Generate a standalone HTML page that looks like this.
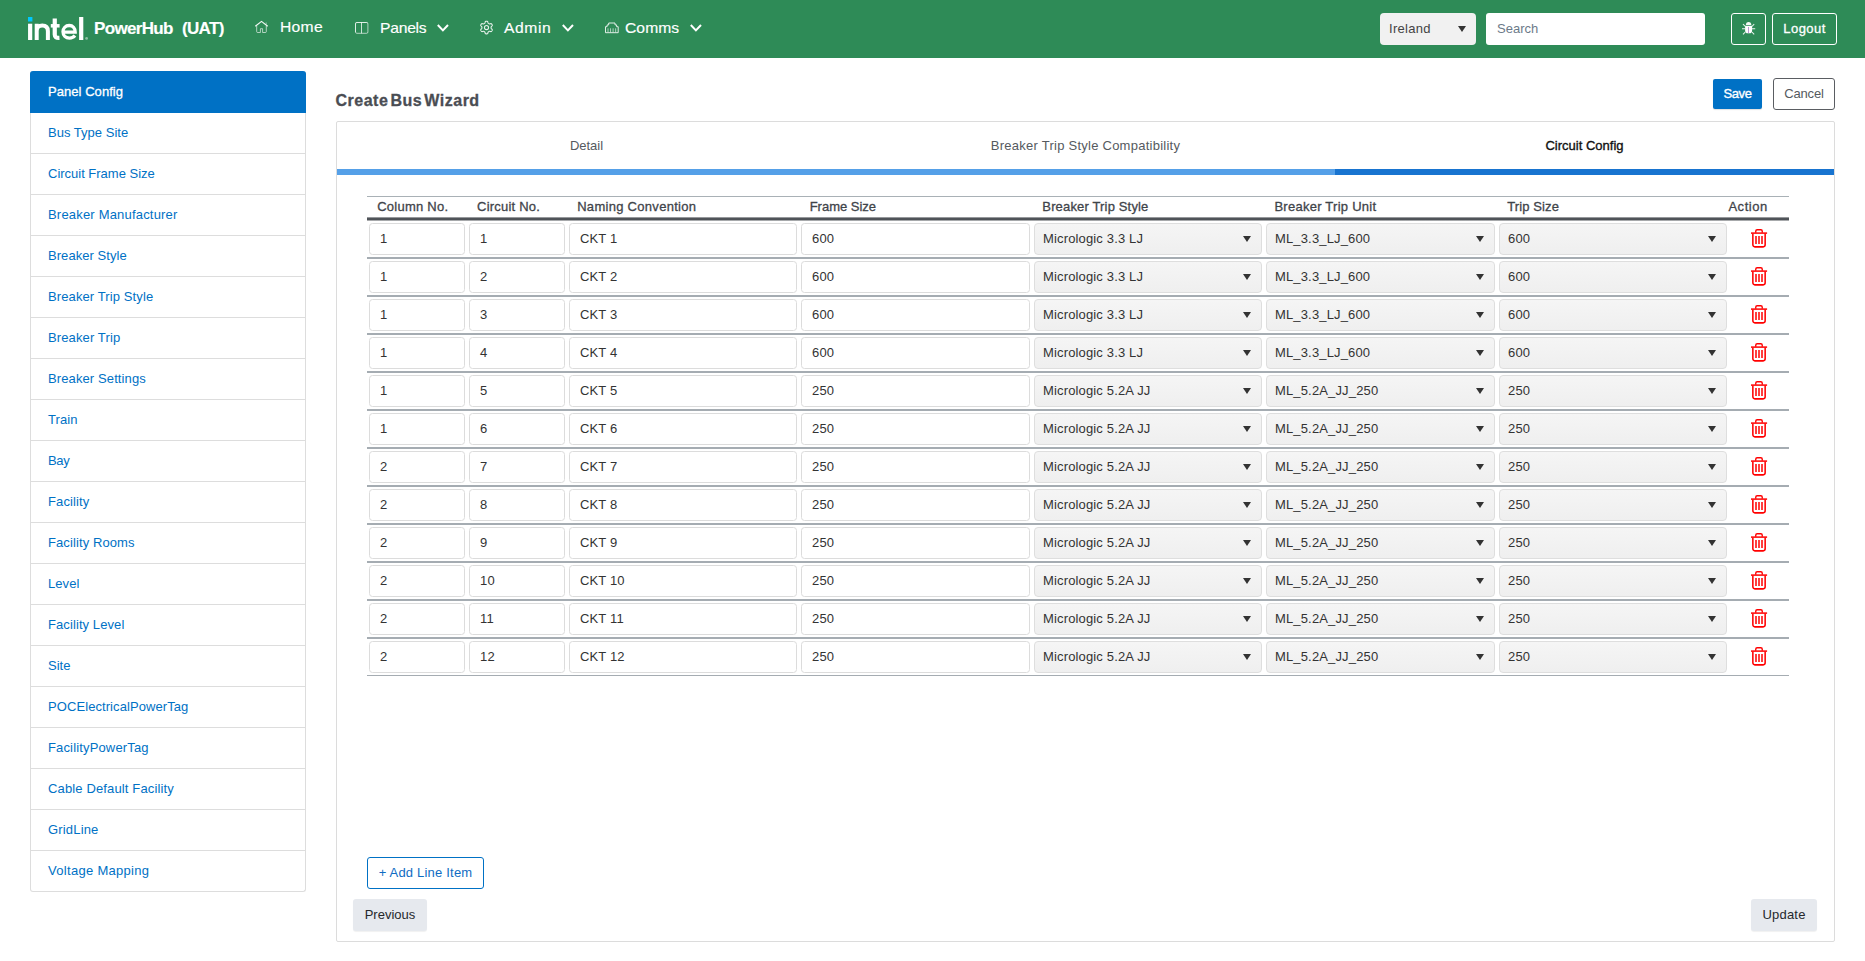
<!DOCTYPE html>
<html lang="en">
<head>
<meta charset="utf-8">
<title>PowerHub (UAT) - Create Bus Wizard</title>
<style>
*{box-sizing:border-box;margin:0;padding:0}
html,body{width:1865px;height:961px;overflow:hidden;background:#fff}
body{font-family:"Liberation Sans",sans-serif;font-size:13px;color:#333;position:relative}
.abs{position:absolute}
/* NAVBAR */
#nav{position:absolute;left:0;top:0;width:1865px;height:58px;background:#2e8b57}
#nav .t{position:absolute;color:#fff;white-space:pre;line-height:1}
.brand{font-weight:700;font-size:17px;letter-spacing:-.66px;-webkit-text-stroke:.15px #fff}
.nl{font-size:14.5px;transform:scaleX(1.08);transform-origin:0 0;-webkit-text-stroke:.15px #fff}
#nav svg{position:absolute;overflow:visible}
.nsel{position:absolute;left:1380px;top:13px;width:96px;height:32px;background:#f1f1f1;border-radius:4px;color:#444;font-size:13px;line-height:32px;padding-left:9px;letter-spacing:.3px}
.nsel:after,.sel:after{content:"";position:absolute;border-left:4px solid transparent;border-right:4px solid transparent;border-top:6px solid #333}
.nsel:after{left:77.5px;top:13px}
.nsearch{position:absolute;left:1486px;top:13px;width:219px;height:32px;background:#fff;border-radius:3px;color:#6c7a89;font-size:13px;line-height:32px;padding-left:11px}
.nbtn{position:absolute;top:13px;height:32px;border:1px solid #fff;border-radius:3px;color:#fff;font-size:13px;line-height:30px;text-align:center}
/* SIDEBAR */
#side{position:absolute;left:30px;top:71px;width:276px;border:1px solid #ddd;border-top:0;border-radius:3px}
#side div{height:41px;line-height:39px;padding-left:17px;border-top:1px solid #ddd;color:#0071c5;white-space:pre;font-size:13px}
#side div.act{height:42px;line-height:41px;margin:0 -1px;padding-left:18px;background:#0071c5;color:#fff;border-top:0;border-radius:3px 3px 0 0;-webkit-text-stroke:.3px #fff}
#side div.first{border-top:0;height:40px;line-height:39px}
/* MAIN */
#title{position:absolute;left:335.500px;top:92px;font-size:16px;font-weight:700;color:#4a4d53;line-height:18px;white-space:pre;letter-spacing:.5px;word-spacing:-2.800px;-webkit-text-stroke:.3px #4a4d53}
#save{position:absolute;left:1713px;top:79px;width:49px;height:30px;background:#0071c5;border-radius:2px;color:#fff;line-height:29px;text-align:center;font-size:13px;box-shadow:0 1px 1px rgba(0,0,0,.12);-webkit-text-stroke:.35px #fff;letter-spacing:-.4px}
#cancel{position:absolute;left:1773px;top:78px;width:62px;height:32px;border:1px solid #5a5d62;border-radius:3px;color:#555a60;line-height:30px;text-align:center;font-size:13px;letter-spacing:-.2px}
#panel{position:absolute;left:336px;top:121px;width:1499px;height:821px;border:1px solid #dcdcdc;border-radius:2px}
.tab{position:absolute;top:138px;width:499px;text-align:center;font-size:13px;line-height:16px;color:#555a60;white-space:pre}
.bar{position:absolute;top:169px;height:6px}
/* TABLE */
#tbl{position:absolute;left:367px;top:196px;width:1422px}
#th{height:21px;border-top:1px solid #a9b1b6;position:relative}
#th span{position:absolute;top:2.300px;line-height:15px;font-size:13px;color:#3f444a;white-space:pre;-webkit-text-stroke:.3px #3f444a}
#thb{height:4px;background:linear-gradient(to bottom,rgba(80,84,89,.6) 0,rgba(80,84,89,.6) 1px,#51555a 1px,#4d5156 3px,rgba(80,84,89,.5) 3px,rgba(80,84,89,.5) 4px)}
.row{height:38px;border-bottom:2px solid #a5acb2;position:relative}
.row:last-child{border-bottom:1px solid #a5acb2;height:37px}
.in,.sel{position:absolute;top:2px;height:32px;border:1px solid #dcdcdc;border-radius:3.500px;line-height:30px;font-size:13px;color:#333;white-space:pre;padding-left:10px;background:#fff;letter-spacing:.15px}
.sel{background:linear-gradient(#f5f5f5,#efefef);padding-left:8px;border-radius:4px;border-color:#dedede}
.sel:after{right:9.900px;top:12px}
.row svg{position:absolute;left:1384px;top:8px;overflow:visible}
#add{position:absolute;left:367px;top:857px;width:117px;height:32px;border:1px solid #0071c5;border-radius:3px;color:#0f6cc3;line-height:30px;text-align:center;font-size:13px;letter-spacing:.2px}
.gbtn{position:absolute;top:899px;height:32px;background:#e6e9ee;border-radius:3px;color:#25282c;line-height:31px;text-align:center;font-size:13px;box-shadow:0 1px 1px rgba(0,0,0,.06)}
</style>
</head>
<body>
<div id="nav">
  <!-- intel logo -->
  <svg style="left:28px;top:17px" width="61" height="24" viewBox="0 0 61 24">
    <rect x="0" y="0" width="4.400" height="4.500" fill="#00c7fd"/>
    <g fill="none" stroke="#fff" stroke-width="4.200">
      <path d="M2.150 6.700V23"/>
      <path d="M8.700 23V6.700M8.700 14c0-3.400 2.200-5.400 5.600-5.400 3.500 0 5.600 2 5.600 5.600V23" stroke-width="4"/>
      <path d="M26.750 1.400V17.500c0 2.600 1.500 3.600 4.700 3.400"/>
      <path d="M22.800 8.800h8.800" stroke-width="3.500"/>
      <path d="M35.200 15.200h12c0-4.200-2.400-6.700-6-6.700-3.700 0-6.200 2.700-6.200 6.300 0 3.700 2.600 6.300 6.500 6.300 2.400 0 4.200-.9 5.400-2.500" stroke-width="3.300"/>
      <path d="M53.200 0V23"/>
    </g>
    <circle cx="58.600" cy="21.400" r="1.400" fill="#fff" opacity=".45"/>
  </svg>
  <span class="t brand" style="left:94px;top:20px">PowerHub</span>
  <span class="t brand" style="left:182px;top:20px">(UAT)</span>

  <svg style="left:255px;top:21px" width="13" height="12" viewBox="0 0 13 12" fill="none" stroke="#fff" stroke-width="1"><path d="M.3 5.300 6.500.4l6.200 4.900" stroke-width="1.150" opacity=".95"/><path d="M1.700 4.800v5.800a.9.9 0 0 0 .9.900h2.800V7.700h2.200v3.800h2.800a.9.900 0 0 0 .9-.900V4.800" opacity=".62"/><path d="M11.200 1.400v2.200" opacity=".45"/></svg>
  <span class="t nl" style="left:280px;top:20px;letter-spacing:.28px">Home</span>

  <svg style="left:355px;top:22px" width="14" height="12" viewBox="0 0 14 12" fill="none" stroke="#fff" stroke-width="1"><rect x=".5" y=".5" width="12.400" height="10.800" rx="1.300" opacity=".62"/><path d="M.5 10V1.800A1.300 1.300 0 0 1 1.800.5h9.800a1.300 1.300 0 0 1 1.100.6" opacity=".6"/><path d="M6.500.5v10.800" opacity=".75"/></svg>
  <span class="t nl" style="left:380px;top:20.9px;letter-spacing:-.22px">Panels</span>
  <svg style="left:437px;top:24px" width="12" height="8" viewBox="0 0 12 8" fill="none" stroke="#fff" stroke-width="2"><path d="M.8 1l5.100 5.400L11 1"/></svg>

  <svg style="left:480px;top:21px" width="13" height="14" viewBox="0 0 13 14" fill="none" stroke="#fff" stroke-width="1.1" opacity=".88"><path d="M11.10 6.60 L11.10 6.36 L11.10 6.12 L11.14 5.86 L11.33 5.57 L11.76 5.19 L12.17 4.76 L12.29 4.38 L12.23 4.05 L12.11 3.74 L11.96 3.45 L11.78 3.17 L11.57 2.91 L11.32 2.70 L10.93 2.61 L10.35 2.75 L9.80 2.93 L9.46 2.95 L9.22 2.86 L9.01 2.74 L8.80 2.62 L8.59 2.50 L8.38 2.37 L8.18 2.21 L8.02 1.91 L7.91 1.34 L7.74 0.77 L7.47 0.48 L7.16 0.36 L6.83 0.31 L6.50 0.30 L6.17 0.31 L5.84 0.36 L5.53 0.48 L5.26 0.77 L5.09 1.34 L4.98 1.91 L4.82 2.21 L4.62 2.37 L4.41 2.50 L4.20 2.62 L3.99 2.74 L3.78 2.86 L3.54 2.95 L3.20 2.93 L2.65 2.75 L2.07 2.61 L1.68 2.70 L1.43 2.91 L1.22 3.17 L1.04 3.45 L0.89 3.74 L0.77 4.05 L0.71 4.38 L0.83 4.76 L1.24 5.19 L1.67 5.57 L1.86 5.86 L1.90 6.12 L1.90 6.36 L1.90 6.60 L1.90 6.84 L1.90 7.08 L1.86 7.34 L1.67 7.63 L1.24 8.01 L0.83 8.44 L0.71 8.82 L0.77 9.15 L0.89 9.46 L1.04 9.75 L1.22 10.03 L1.43 10.29 L1.68 10.50 L2.07 10.59 L2.65 10.45 L3.20 10.27 L3.54 10.25 L3.78 10.34 L3.99 10.46 L4.20 10.58 L4.41 10.70 L4.62 10.83 L4.82 10.99 L4.98 11.29 L5.09 11.86 L5.26 12.43 L5.53 12.72 L5.84 12.84 L6.17 12.89 L6.50 12.90 L6.83 12.89 L7.16 12.84 L7.47 12.72 L7.74 12.43 L7.91 11.86 L8.02 11.29 L8.18 10.99 L8.38 10.83 L8.59 10.70 L8.80 10.58 L9.01 10.46 L9.22 10.34 L9.46 10.25 L9.80 10.27 L10.35 10.45 L10.93 10.59 L11.32 10.50 L11.57 10.29 L11.78 10.03 L11.96 9.75 L12.11 9.46 L12.23 9.15 L12.29 8.82 L12.17 8.44 L11.76 8.01 L11.33 7.63 L11.14 7.34 L11.10 7.08 L11.10 6.84Z"/><circle cx="6.500" cy="6.600" r="2.050"/></svg>
  <span class="t nl" style="left:504px;top:20.9px;letter-spacing:.52px">Admin</span>
  <svg style="left:562px;top:24px" width="12" height="8" viewBox="0 0 12 8" fill="none" stroke="#fff" stroke-width="2"><path d="M.8 1l5.100 5.400L11 1"/></svg>

  <svg style="left:605px;top:22px" width="14" height="12" viewBox="0 0 14 12" fill="none" stroke="#fff" stroke-width="1"><path d="M.5 10.700V4.700H2.100V2.900H3.700V1H10V2.900H11.600V4.700H13.200V10.700Z" opacity=".85"/><path d="M3 6.300v4M5.550 6.300v4M8.100 6.300v4M10.650 6.300v4" opacity=".6"/></svg>
  <span class="t nl" style="left:625px;top:20.9px;letter-spacing:.06px">Comms</span>
  <svg style="left:690px;top:24px" width="12" height="8" viewBox="0 0 12 8" fill="none" stroke="#fff" stroke-width="2"><path d="M.8 1l5.100 5.400L11 1"/></svg>

  <div class="nsel">Ireland</div>
  <div class="nsearch">Search</div>
  <div class="nbtn" style="left:1731px;width:35px">
    <svg style="left:10px;top:7.800px" width="13" height="13" viewBox="0 0 13 13"><path d="M3.900 3.050a2.700 3.050 0 0 1 5.400 0z" fill="#fff" opacity=".95"/><path d="M3.100 3.700H10.100V8.400a2.800 2.800 0 0 1-2.800 2.800H5.900a2.800 2.800 0 0 1-2.800-2.800z" fill="#fff"/><path d="M1 2.200 3.300 4.500M12.200 2.200 9.900 4.500M0 6.800H3.200M10 6.800H13.200M1 12.400 3.300 10M12.200 12.400 9.900 10" stroke="#fff" stroke-width="1.050" fill="none" opacity=".9"/><path d="M6.150 4.900h.85v6.300h-.85z" fill="#b084c8"/></svg>
  </div>
  <div class="nbtn" style="left:1772px;width:65px;-webkit-text-stroke:.3px #fff;letter-spacing:.45px">Logout</div>
</div>

<div id="side">
  <div class="act" style="letter-spacing:0.05px">Panel Config</div>
  <div class="first" style="letter-spacing:0.02px">Bus Type Site</div>
  <div style="letter-spacing:-0.01px">Circuit Frame Size</div>
  <div style="letter-spacing:0.19px">Breaker Manufacturer</div>
  <div style="letter-spacing:0.05px">Breaker Style</div>
  <div style="letter-spacing:0.11px">Breaker Trip Style</div>
  <div style="letter-spacing:0.12px">Breaker Trip</div>
  <div style="letter-spacing:0.11px">Breaker Settings</div>
  <div style="letter-spacing:0.11px">Train</div>
  <div style="letter-spacing:-0.37px">Bay</div>
  <div style="letter-spacing:0.13px">Facility</div>
  <div style="letter-spacing:0.10px">Facility Rooms</div>
  <div style="letter-spacing:0.08px">Level</div>
  <div style="letter-spacing:0.09px">Facility Level</div>
  <div style="letter-spacing:0.02px">Site</div>
  <div style="letter-spacing:0.08px">POCElectricalPowerTag</div>
  <div style="letter-spacing:0.15px">FacilityPowerTag</div>
  <div style="letter-spacing:0.14px">Cable Default Facility</div>
  <div style="letter-spacing:0.17px">GridLine</div>
  <div style="letter-spacing:0.30px">Voltage Mapping</div>
</div>

<div id="title">Create Bus Wizard</div>
<div id="save">Save</div>
<div id="cancel">Cancel</div>
<div id="panel"></div>
<div class="tab" style="left:337px">Detail</div>
<div class="tab" style="left:836px;letter-spacing:.25px">Breaker Trip Style Compatibility</div>
<div class="tab" style="left:1335px;color:#111;-webkit-text-stroke:.35px #111">Circuit Config</div>
<div class="bar" style="left:337px;width:998px;background:#55a0e8"></div>
<div class="bar" style="left:1335px;width:499px;background:#1874d0"></div>

<div id="tbl">
  <div id="th">
    <span style="left:10.2px;letter-spacing:0.25px">Column No.</span>
    <span style="left:110.1px;letter-spacing:0.20px">Circuit No.</span>
    <span style="left:210.2px;letter-spacing:0.29px">Naming Convention</span>
    <span style="left:442.7px;letter-spacing:-0.01px">Frame Size</span>
    <span style="left:675.3px;letter-spacing:0.16px">Breaker Trip Style</span>
    <span style="left:907.4px;letter-spacing:0.26px">Breaker Trip Unit</span>
    <span style="left:1140.3px;letter-spacing:0.10px">Trip Size</span>
    <span style="left:1361.4px;letter-spacing:0.54px">Action</span>
  </div>
  <div id="thb"></div>
  <div id="rows">
    <div class="row"><div class="in" style="left:2px;width:96px">1</div><div class="in" style="left:102px;width:96px">1</div><div class="in" style="left:202px;width:228px">CKT 1</div><div class="in" style="left:434px;width:229px">600</div><div class="sel" style="left:667px;width:228px">Micrologic 3.3 LJ</div><div class="sel" style="left:899px;width:229px">ML_3.3_LJ_600</div><div class="sel" style="left:1132px;width:228px">600</div><svg width="16" height="19" viewBox="0 0 16 19" fill="none" stroke="#f00" stroke-width="1.550"><path d="M4.750 3.700V2.200a1.400 1.400 0 0 1 1.400-1.400h3.700a1.400 1.400 0 0 1 1.400 1.400V3.700" stroke-width="1.400"/><path d="M0 4.100h16.100" stroke-width="1.500"/><path d="M1.850 4.500V15.850a2 2 0 0 0 2 2h8.300a2 2 0 0 0 2-2V4.500"/><path d="M5 7v7.900M8 7v7.900M11 7v7.900" stroke-width="1.500"/></svg></div>
    <div class="row"><div class="in" style="left:2px;width:96px">1</div><div class="in" style="left:102px;width:96px">2</div><div class="in" style="left:202px;width:228px">CKT 2</div><div class="in" style="left:434px;width:229px">600</div><div class="sel" style="left:667px;width:228px">Micrologic 3.3 LJ</div><div class="sel" style="left:899px;width:229px">ML_3.3_LJ_600</div><div class="sel" style="left:1132px;width:228px">600</div><svg width="16" height="19" viewBox="0 0 16 19" fill="none" stroke="#f00" stroke-width="1.550"><path d="M4.750 3.700V2.200a1.400 1.400 0 0 1 1.400-1.400h3.700a1.400 1.400 0 0 1 1.400 1.400V3.700" stroke-width="1.400"/><path d="M0 4.100h16.100" stroke-width="1.500"/><path d="M1.850 4.500V15.850a2 2 0 0 0 2 2h8.300a2 2 0 0 0 2-2V4.500"/><path d="M5 7v7.900M8 7v7.900M11 7v7.900" stroke-width="1.500"/></svg></div>
    <div class="row"><div class="in" style="left:2px;width:96px">1</div><div class="in" style="left:102px;width:96px">3</div><div class="in" style="left:202px;width:228px">CKT 3</div><div class="in" style="left:434px;width:229px">600</div><div class="sel" style="left:667px;width:228px">Micrologic 3.3 LJ</div><div class="sel" style="left:899px;width:229px">ML_3.3_LJ_600</div><div class="sel" style="left:1132px;width:228px">600</div><svg width="16" height="19" viewBox="0 0 16 19" fill="none" stroke="#f00" stroke-width="1.550"><path d="M4.750 3.700V2.200a1.400 1.400 0 0 1 1.400-1.400h3.700a1.400 1.400 0 0 1 1.400 1.400V3.700" stroke-width="1.400"/><path d="M0 4.100h16.100" stroke-width="1.500"/><path d="M1.850 4.500V15.850a2 2 0 0 0 2 2h8.300a2 2 0 0 0 2-2V4.500"/><path d="M5 7v7.900M8 7v7.900M11 7v7.900" stroke-width="1.500"/></svg></div>
    <div class="row"><div class="in" style="left:2px;width:96px">1</div><div class="in" style="left:102px;width:96px">4</div><div class="in" style="left:202px;width:228px">CKT 4</div><div class="in" style="left:434px;width:229px">600</div><div class="sel" style="left:667px;width:228px">Micrologic 3.3 LJ</div><div class="sel" style="left:899px;width:229px">ML_3.3_LJ_600</div><div class="sel" style="left:1132px;width:228px">600</div><svg width="16" height="19" viewBox="0 0 16 19" fill="none" stroke="#f00" stroke-width="1.550"><path d="M4.750 3.700V2.200a1.400 1.400 0 0 1 1.400-1.400h3.700a1.400 1.400 0 0 1 1.400 1.400V3.700" stroke-width="1.400"/><path d="M0 4.100h16.100" stroke-width="1.500"/><path d="M1.850 4.500V15.850a2 2 0 0 0 2 2h8.300a2 2 0 0 0 2-2V4.500"/><path d="M5 7v7.900M8 7v7.900M11 7v7.900" stroke-width="1.500"/></svg></div>
    <div class="row"><div class="in" style="left:2px;width:96px">1</div><div class="in" style="left:102px;width:96px">5</div><div class="in" style="left:202px;width:228px">CKT 5</div><div class="in" style="left:434px;width:229px">250</div><div class="sel" style="left:667px;width:228px">Micrologic 5.2A JJ</div><div class="sel" style="left:899px;width:229px">ML_5.2A_JJ_250</div><div class="sel" style="left:1132px;width:228px">250</div><svg width="16" height="19" viewBox="0 0 16 19" fill="none" stroke="#f00" stroke-width="1.550"><path d="M4.750 3.700V2.200a1.400 1.400 0 0 1 1.400-1.400h3.700a1.400 1.400 0 0 1 1.400 1.400V3.700" stroke-width="1.400"/><path d="M0 4.100h16.100" stroke-width="1.500"/><path d="M1.850 4.500V15.850a2 2 0 0 0 2 2h8.300a2 2 0 0 0 2-2V4.500"/><path d="M5 7v7.900M8 7v7.900M11 7v7.900" stroke-width="1.500"/></svg></div>
    <div class="row"><div class="in" style="left:2px;width:96px">1</div><div class="in" style="left:102px;width:96px">6</div><div class="in" style="left:202px;width:228px">CKT 6</div><div class="in" style="left:434px;width:229px">250</div><div class="sel" style="left:667px;width:228px">Micrologic 5.2A JJ</div><div class="sel" style="left:899px;width:229px">ML_5.2A_JJ_250</div><div class="sel" style="left:1132px;width:228px">250</div><svg width="16" height="19" viewBox="0 0 16 19" fill="none" stroke="#f00" stroke-width="1.550"><path d="M4.750 3.700V2.200a1.400 1.400 0 0 1 1.400-1.400h3.700a1.400 1.400 0 0 1 1.400 1.400V3.700" stroke-width="1.400"/><path d="M0 4.100h16.100" stroke-width="1.500"/><path d="M1.850 4.500V15.850a2 2 0 0 0 2 2h8.300a2 2 0 0 0 2-2V4.500"/><path d="M5 7v7.900M8 7v7.900M11 7v7.900" stroke-width="1.500"/></svg></div>
    <div class="row"><div class="in" style="left:2px;width:96px">2</div><div class="in" style="left:102px;width:96px">7</div><div class="in" style="left:202px;width:228px">CKT 7</div><div class="in" style="left:434px;width:229px">250</div><div class="sel" style="left:667px;width:228px">Micrologic 5.2A JJ</div><div class="sel" style="left:899px;width:229px">ML_5.2A_JJ_250</div><div class="sel" style="left:1132px;width:228px">250</div><svg width="16" height="19" viewBox="0 0 16 19" fill="none" stroke="#f00" stroke-width="1.550"><path d="M4.750 3.700V2.200a1.400 1.400 0 0 1 1.400-1.400h3.700a1.400 1.400 0 0 1 1.400 1.400V3.700" stroke-width="1.400"/><path d="M0 4.100h16.100" stroke-width="1.500"/><path d="M1.850 4.500V15.850a2 2 0 0 0 2 2h8.300a2 2 0 0 0 2-2V4.500"/><path d="M5 7v7.900M8 7v7.900M11 7v7.900" stroke-width="1.500"/></svg></div>
    <div class="row"><div class="in" style="left:2px;width:96px">2</div><div class="in" style="left:102px;width:96px">8</div><div class="in" style="left:202px;width:228px">CKT 8</div><div class="in" style="left:434px;width:229px">250</div><div class="sel" style="left:667px;width:228px">Micrologic 5.2A JJ</div><div class="sel" style="left:899px;width:229px">ML_5.2A_JJ_250</div><div class="sel" style="left:1132px;width:228px">250</div><svg width="16" height="19" viewBox="0 0 16 19" fill="none" stroke="#f00" stroke-width="1.550"><path d="M4.750 3.700V2.200a1.400 1.400 0 0 1 1.400-1.400h3.700a1.400 1.400 0 0 1 1.400 1.400V3.700" stroke-width="1.400"/><path d="M0 4.100h16.100" stroke-width="1.500"/><path d="M1.850 4.500V15.850a2 2 0 0 0 2 2h8.300a2 2 0 0 0 2-2V4.500"/><path d="M5 7v7.900M8 7v7.900M11 7v7.900" stroke-width="1.500"/></svg></div>
    <div class="row"><div class="in" style="left:2px;width:96px">2</div><div class="in" style="left:102px;width:96px">9</div><div class="in" style="left:202px;width:228px">CKT 9</div><div class="in" style="left:434px;width:229px">250</div><div class="sel" style="left:667px;width:228px">Micrologic 5.2A JJ</div><div class="sel" style="left:899px;width:229px">ML_5.2A_JJ_250</div><div class="sel" style="left:1132px;width:228px">250</div><svg width="16" height="19" viewBox="0 0 16 19" fill="none" stroke="#f00" stroke-width="1.550"><path d="M4.750 3.700V2.200a1.400 1.400 0 0 1 1.400-1.400h3.700a1.400 1.400 0 0 1 1.400 1.400V3.700" stroke-width="1.400"/><path d="M0 4.100h16.100" stroke-width="1.500"/><path d="M1.850 4.500V15.850a2 2 0 0 0 2 2h8.300a2 2 0 0 0 2-2V4.500"/><path d="M5 7v7.900M8 7v7.900M11 7v7.900" stroke-width="1.500"/></svg></div>
    <div class="row"><div class="in" style="left:2px;width:96px">2</div><div class="in" style="left:102px;width:96px">10</div><div class="in" style="left:202px;width:228px">CKT 10</div><div class="in" style="left:434px;width:229px">250</div><div class="sel" style="left:667px;width:228px">Micrologic 5.2A JJ</div><div class="sel" style="left:899px;width:229px">ML_5.2A_JJ_250</div><div class="sel" style="left:1132px;width:228px">250</div><svg width="16" height="19" viewBox="0 0 16 19" fill="none" stroke="#f00" stroke-width="1.550"><path d="M4.750 3.700V2.200a1.400 1.400 0 0 1 1.400-1.400h3.700a1.400 1.400 0 0 1 1.400 1.400V3.700" stroke-width="1.400"/><path d="M0 4.100h16.100" stroke-width="1.500"/><path d="M1.850 4.500V15.850a2 2 0 0 0 2 2h8.300a2 2 0 0 0 2-2V4.500"/><path d="M5 7v7.900M8 7v7.900M11 7v7.900" stroke-width="1.500"/></svg></div>
    <div class="row"><div class="in" style="left:2px;width:96px">2</div><div class="in" style="left:102px;width:96px">11</div><div class="in" style="left:202px;width:228px">CKT 11</div><div class="in" style="left:434px;width:229px">250</div><div class="sel" style="left:667px;width:228px">Micrologic 5.2A JJ</div><div class="sel" style="left:899px;width:229px">ML_5.2A_JJ_250</div><div class="sel" style="left:1132px;width:228px">250</div><svg width="16" height="19" viewBox="0 0 16 19" fill="none" stroke="#f00" stroke-width="1.550"><path d="M4.750 3.700V2.200a1.400 1.400 0 0 1 1.400-1.400h3.700a1.400 1.400 0 0 1 1.400 1.400V3.700" stroke-width="1.400"/><path d="M0 4.100h16.100" stroke-width="1.500"/><path d="M1.850 4.500V15.850a2 2 0 0 0 2 2h8.300a2 2 0 0 0 2-2V4.500"/><path d="M5 7v7.900M8 7v7.900M11 7v7.900" stroke-width="1.500"/></svg></div>
    <div class="row"><div class="in" style="left:2px;width:96px">2</div><div class="in" style="left:102px;width:96px">12</div><div class="in" style="left:202px;width:228px">CKT 12</div><div class="in" style="left:434px;width:229px">250</div><div class="sel" style="left:667px;width:228px">Micrologic 5.2A JJ</div><div class="sel" style="left:899px;width:229px">ML_5.2A_JJ_250</div><div class="sel" style="left:1132px;width:228px">250</div><svg width="16" height="19" viewBox="0 0 16 19" fill="none" stroke="#f00" stroke-width="1.550"><path d="M4.750 3.700V2.200a1.400 1.400 0 0 1 1.400-1.400h3.700a1.400 1.400 0 0 1 1.400 1.400V3.700" stroke-width="1.400"/><path d="M0 4.100h16.100" stroke-width="1.500"/><path d="M1.850 4.500V15.850a2 2 0 0 0 2 2h8.300a2 2 0 0 0 2-2V4.500"/><path d="M5 7v7.900M8 7v7.900M11 7v7.900" stroke-width="1.500"/></svg></div>
  </div>
</div>

<div id="add">+ Add Line Item</div>
<div class="gbtn" style="left:353px;width:74px">Previous</div>
<div class="gbtn" style="left:1751px;width:66px;letter-spacing:.2px">Update</div>
</body>
</html>
